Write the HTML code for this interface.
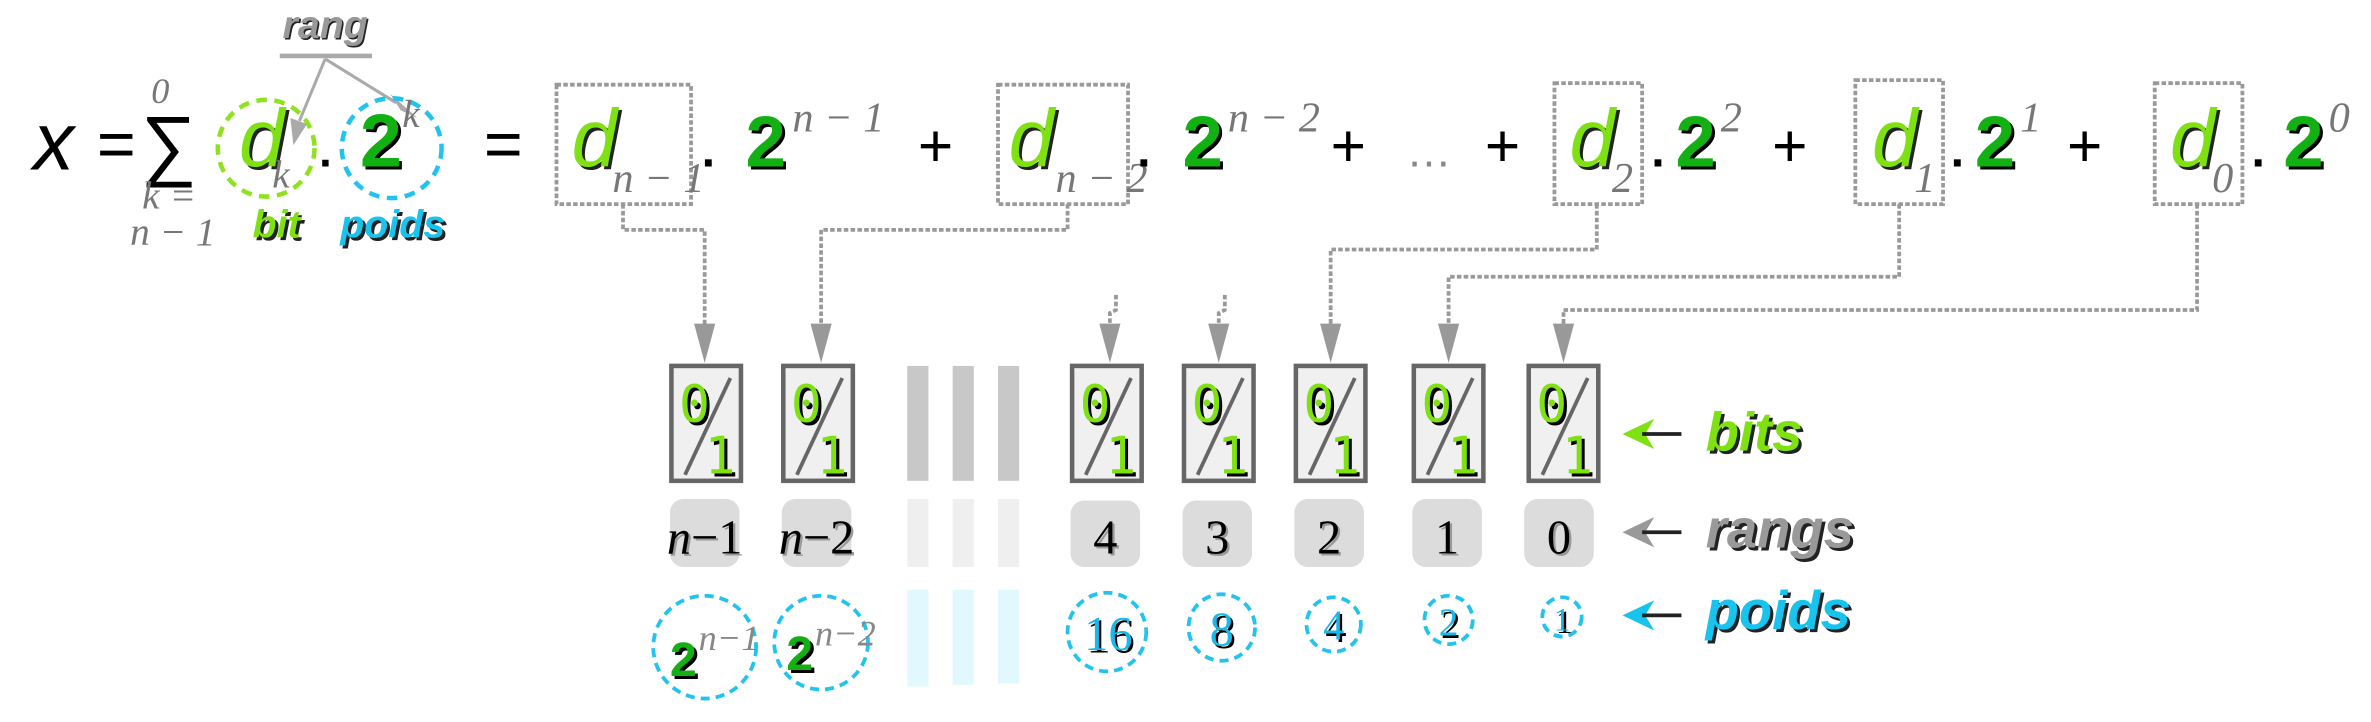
<!DOCTYPE html>
<html><head><meta charset="utf-8"><style>
html,body{margin:0;padding:0;background:#fff;width:2371px;height:722px;overflow:hidden}
svg{display:block}
.sans{font-family:"Liberation Sans",sans-serif}
.ser{font-family:"Liberation Serif",serif;font-style:italic}
.rom{font-family:"Liberation Serif",serif}
.mono{font-family:"DejaVu Sans Mono","Liberation Mono",monospace}
.lbl{font-family:"Liberation Sans",sans-serif;font-weight:bold;font-style:italic}
</style></head><body>
<svg width="2371" height="722" viewBox="0 0 1568 477.5" xmlns="http://www.w3.org/2000/svg">
<!-- rang -->
<text x="216" y="26" class="lbl" font-size="26" fill="#222" text-anchor="middle">rang</text>
<text x="215" y="25" class="lbl" font-size="26" fill="#999" text-anchor="middle">rang</text>
<line x1="185" y1="37" x2="246" y2="37" stroke="#aaa" stroke-width="3"/>
<line x1="215" y1="39" x2="198" y2="80" stroke="#aaa" stroke-width="2"/>
<polygon points="192,78 203,82 194,96" fill="#aaa"/>
<line x1="215" y1="39" x2="262" y2="68" stroke="#aaa" stroke-width="2"/>
<polygon points="258,62 265,73 276,78" fill="#aaa"/>

<!-- x = sum -->
<text x="22" y="112" class="sans" font-style="italic" font-size="54" fill="#000">x</text>
<text x="64" y="110" class="sans" font-size="44" fill="#000">=</text>
<text x="93" y="113" class="sans" font-size="52" fill="#000">∑</text>
<text x="100" y="68" class="ser" font-size="24" fill="#777">0</text>
<text x="94" y="138" class="ser" font-size="26" fill="#777">k =</text>
<text x="86" y="162" class="ser" font-size="26" fill="#777">n − 1</text>
<circle cx="176" cy="98" r="32" fill="none" stroke="#8fe21f" stroke-width="3" stroke-dasharray="7,5"/>
<circle cx="259" cy="98" r="33" fill="none" stroke="#22c3ee" stroke-width="3" stroke-dasharray="7,5"/>
<text x="160" y="112" class="sans" font-size="54" font-style="italic" fill="#222">d</text>
<text x="158" y="110" class="sans" font-size="54" font-style="italic" fill="#7fe012">d</text>
<text x="180" y="124" class="ser" font-size="26" fill="#777">k</text>
<text x="211" y="110" class="sans" font-size="30" font-weight="bold" fill="#000">.</text>
<text x="240" y="112" class="sans" font-size="50" font-weight="bold" fill="#000">2</text>
<text x="238" y="110" class="sans" font-size="50" font-weight="bold" fill="#12b012">2</text>
<text x="266" y="84" class="ser" font-size="26" fill="#777">k</text>
<text x="169" y="159" class="lbl" font-size="26" fill="#222">bit</text>
<text x="167" y="157" class="lbl" font-size="26" fill="#7fe012">bit</text>
<text x="227" y="159" class="lbl" font-size="26" fill="#222">poids</text>
<text x="225" y="157" class="lbl" font-size="26" fill="#18c3ee">poids</text>
<text x="320" y="110" class="sans" font-size="44" fill="#000">=</text>

<!-- boxes -->
<g fill="none" stroke="#999" stroke-width="2.5" stroke-dasharray="3,1.5">
<rect x="368" y="56" width="89" height="79"/>
<rect x="660" y="56" width="86" height="79"/>
<rect x="1028" y="55" width="58" height="80"/>
<rect x="1227" y="53" width="58" height="82"/>
<rect x="1425" y="55" width="58" height="80"/>
<polyline points="412,135 412,152 466,152 466,215"/>
<polyline points="706,135 706,152 543,152 543,215"/>
<polyline points="1056,135 1056,165 880,165 880,215"/>
<polyline points="1256,135 1256,183 958,183 958,215"/>
<polyline points="1453,135 1453,205 1034,205 1034,215"/>
<polyline points="738,195 738,205 734,207 734,215"/>
<polyline points="810,195 810,205 806,207 806,215"/>
</g>
<g fill="#999">
<polygon points="459,214 473,214 466,240"/>
<polygon points="536,214 550,214 543,240"/>
<polygon points="727,214 741,214 734,240"/>
<polygon points="799,214 813,214 806,240"/>
<polygon points="873,214 887,214 880,240"/>
<polygon points="951,214 965,214 958,240"/>
<polygon points="1027,214 1041,214 1034,240"/>
</g>

<!-- top terms -->
<g>
<text x="380" y="112" class="sans" font-size="54" font-style="italic" fill="#222">d</text>
<text x="378" y="110" class="sans" font-size="54" font-style="italic" fill="#7fe012">d</text>
<text x="405" y="127" class="ser" font-size="28" fill="#777">n − 1</text>
<text x="464" y="110" class="sans" font-size="32" font-weight="bold" fill="#000">.</text>
<text x="495" y="112" class="sans" font-size="48" font-weight="bold" fill="#000">2</text>
<text x="493" y="110" class="sans" font-size="48" font-weight="bold" fill="#12b012">2</text>
<text x="524" y="87" class="ser" font-size="28" fill="#777">n − 1</text>
<text x="607" y="110" class="sans" font-size="40" fill="#000">+</text>

<text x="669" y="112" class="sans" font-size="54" font-style="italic" fill="#222">d</text>
<text x="667" y="110" class="sans" font-size="54" font-style="italic" fill="#7fe012">d</text>
<text x="698" y="127" class="ser" font-size="28" fill="#777">n − 2</text>
<text x="752" y="110" class="sans" font-size="32" font-weight="bold" fill="#000">.</text>
<text x="784" y="112" class="sans" font-size="48" font-weight="bold" fill="#000">2</text>
<text x="782" y="110" class="sans" font-size="48" font-weight="bold" fill="#12b012">2</text>
<text x="812" y="87" class="ser" font-size="28" fill="#777">n − 2</text>
<text x="880" y="110" class="sans" font-size="40" fill="#000">+</text>
<text x="930" y="110" class="sans" font-size="30" fill="#888">…</text>
<text x="982" y="110" class="sans" font-size="40" fill="#000">+</text>

<text x="1040" y="112" class="sans" font-size="54" font-style="italic" fill="#222">d</text>
<text x="1038" y="110" class="sans" font-size="54" font-style="italic" fill="#7fe012">d</text>
<text x="1066" y="127" class="ser" font-size="28" fill="#777">2</text>
<text x="1092" y="110" class="sans" font-size="32" font-weight="bold" fill="#000">.</text>
<text x="1110" y="112" class="sans" font-size="48" font-weight="bold" fill="#000">2</text>
<text x="1108" y="110" class="sans" font-size="48" font-weight="bold" fill="#12b012">2</text>
<text x="1138" y="87" class="ser" font-size="28" fill="#777">2</text>
<text x="1172" y="110" class="sans" font-size="40" fill="#000">+</text>

<text x="1240" y="112" class="sans" font-size="54" font-style="italic" fill="#222">d</text>
<text x="1238" y="110" class="sans" font-size="54" font-style="italic" fill="#7fe012">d</text>
<text x="1266" y="127" class="ser" font-size="28" fill="#777">1</text>
<text x="1290" y="110" class="sans" font-size="32" font-weight="bold" fill="#000">.</text>
<text x="1308" y="112" class="sans" font-size="48" font-weight="bold" fill="#000">2</text>
<text x="1306" y="110" class="sans" font-size="48" font-weight="bold" fill="#12b012">2</text>
<text x="1336" y="87" class="ser" font-size="28" fill="#777">1</text>
<text x="1367" y="110" class="sans" font-size="40" fill="#000">+</text>

<text x="1437" y="112" class="sans" font-size="54" font-style="italic" fill="#222">d</text>
<text x="1435" y="110" class="sans" font-size="54" font-style="italic" fill="#7fe012">d</text>
<text x="1463" y="127" class="ser" font-size="28" fill="#777">0</text>
<text x="1489" y="110" class="sans" font-size="32" font-weight="bold" fill="#000">.</text>
<text x="1512" y="112" class="sans" font-size="48" font-weight="bold" fill="#000">2</text>
<text x="1510" y="110" class="sans" font-size="48" font-weight="bold" fill="#12b012">2</text>
<text x="1540" y="87" class="ser" font-size="28" fill="#777">0</text>
</g>

<!-- gray bars -->
<g fill="#c8c8c8"><rect x="600" y="242" width="14" height="76"/><rect x="630" y="242" width="14" height="76"/><rect x="660" y="242" width="14" height="76"/></g>
<g fill="#efefef"><rect x="600" y="330" width="14" height="45"/><rect x="630" y="330" width="14" height="45"/><rect x="660" y="330" width="14" height="45"/></g>
<g fill="#e2f8ff"><rect x="600" y="390" width="14" height="64"/><rect x="630" y="390" width="14" height="63"/><rect x="660" y="390" width="14" height="62"/></g>

<!-- bit boxes -->
<g>
<g transform="translate(443,0)"><rect x="1" y="242" width="46" height="76" fill="#f0f0f0" stroke="#666" stroke-width="3"/><line x1="40" y1="250" x2="10" y2="314" stroke="#666" stroke-width="2.5"/><text x="8" y="281" class="mono" font-size="34" fill="#000">0</text><text x="6" y="279" class="mono" font-size="34" fill="#7fe012">0</text><text x="25" y="315" class="mono" font-size="34" fill="#000">1</text><text x="23" y="313" class="mono" font-size="34" fill="#7fe012">1</text></g>
<g transform="translate(517,0)"><rect x="1" y="242" width="46" height="76" fill="#f0f0f0" stroke="#666" stroke-width="3"/><line x1="40" y1="250" x2="10" y2="314" stroke="#666" stroke-width="2.5"/><text x="8" y="281" class="mono" font-size="34" fill="#000">0</text><text x="6" y="279" class="mono" font-size="34" fill="#7fe012">0</text><text x="25" y="315" class="mono" font-size="34" fill="#000">1</text><text x="23" y="313" class="mono" font-size="34" fill="#7fe012">1</text></g>
<g transform="translate(708,0)"><rect x="1" y="242" width="46" height="76" fill="#f0f0f0" stroke="#666" stroke-width="3"/><line x1="40" y1="250" x2="10" y2="314" stroke="#666" stroke-width="2.5"/><text x="8" y="281" class="mono" font-size="34" fill="#000">0</text><text x="6" y="279" class="mono" font-size="34" fill="#7fe012">0</text><text x="25" y="315" class="mono" font-size="34" fill="#000">1</text><text x="23" y="313" class="mono" font-size="34" fill="#7fe012">1</text></g>
<g transform="translate(782,0)"><rect x="1" y="242" width="46" height="76" fill="#f0f0f0" stroke="#666" stroke-width="3"/><line x1="40" y1="250" x2="10" y2="314" stroke="#666" stroke-width="2.5"/><text x="8" y="281" class="mono" font-size="34" fill="#000">0</text><text x="6" y="279" class="mono" font-size="34" fill="#7fe012">0</text><text x="25" y="315" class="mono" font-size="34" fill="#000">1</text><text x="23" y="313" class="mono" font-size="34" fill="#7fe012">1</text></g>
<g transform="translate(856,0)"><rect x="1" y="242" width="46" height="76" fill="#f0f0f0" stroke="#666" stroke-width="3"/><line x1="40" y1="250" x2="10" y2="314" stroke="#666" stroke-width="2.5"/><text x="8" y="281" class="mono" font-size="34" fill="#000">0</text><text x="6" y="279" class="mono" font-size="34" fill="#7fe012">0</text><text x="25" y="315" class="mono" font-size="34" fill="#000">1</text><text x="23" y="313" class="mono" font-size="34" fill="#7fe012">1</text></g>
<g transform="translate(934,0)"><rect x="1" y="242" width="46" height="76" fill="#f0f0f0" stroke="#666" stroke-width="3"/><line x1="40" y1="250" x2="10" y2="314" stroke="#666" stroke-width="2.5"/><text x="8" y="281" class="mono" font-size="34" fill="#000">0</text><text x="6" y="279" class="mono" font-size="34" fill="#7fe012">0</text><text x="25" y="315" class="mono" font-size="34" fill="#000">1</text><text x="23" y="313" class="mono" font-size="34" fill="#7fe012">1</text></g>
<g transform="translate(1010,0)"><rect x="1" y="242" width="46" height="76" fill="#f0f0f0" stroke="#666" stroke-width="3"/><line x1="40" y1="250" x2="10" y2="314" stroke="#666" stroke-width="2.5"/><text x="8" y="281" class="mono" font-size="34" fill="#000">0</text><text x="6" y="279" class="mono" font-size="34" fill="#7fe012">0</text><text x="25" y="315" class="mono" font-size="34" fill="#000">1</text><text x="23" y="313" class="mono" font-size="34" fill="#7fe012">1</text></g>
</g>

<!-- rangs -->
<g fill="#dcdcdc">
<rect x="443" y="330" width="46" height="45" rx="9"/><rect x="517" y="330" width="46" height="45" rx="9"/>
<rect x="708" y="331" width="46" height="44" rx="9"/><rect x="782" y="331" width="46" height="44" rx="9"/>
<rect x="856" y="330" width="46" height="45" rx="9"/><rect x="934" y="330" width="46" height="45" rx="9"/>
<rect x="1008" y="330" width="46" height="45" rx="9"/>
</g>
<g class="rom" font-size="32" text-anchor="middle">
<g fill="#999" transform="translate(1.5,1.5)">
<text x="466" y="366"><tspan font-style="italic">n</tspan>−1</text>
<text x="540" y="366"><tspan font-style="italic">n</tspan>−2</text>
<text x="731" y="366">4</text><text x="805" y="366">3</text><text x="879" y="366">2</text><text x="957" y="366">1</text><text x="1031" y="366">0</text>
</g>
<g fill="#000">
<text x="466" y="366"><tspan font-style="italic">n</tspan>−1</text>
<text x="540" y="366"><tspan font-style="italic">n</tspan>−2</text>
<text x="731" y="366">4</text><text x="805" y="366">3</text><text x="879" y="366">2</text><text x="957" y="366">1</text><text x="1031" y="366">0</text>
</g>
</g>

<!-- poids -->
<g fill="none" stroke="#22c3ee" stroke-width="2.5" stroke-dasharray="6,4">
<circle cx="466" cy="428" r="34"/><circle cx="543" cy="425" r="31"/>
<circle cx="732" cy="418" r="26"/><circle cx="808" cy="415" r="22"/>
<circle cx="882" cy="413" r="18"/><circle cx="958" cy="410" r="16"/><circle cx="1033" cy="408" r="13"/>
</g>
<text x="445" y="449" class="sans" font-size="32" font-weight="bold" fill="#000">2</text>
<text x="443" y="447" class="sans" font-size="32" font-weight="bold" fill="#12b012">2</text>
<text x="462" y="430" class="ser" font-size="24" fill="#888">n−1</text>
<text x="522" y="445" class="sans" font-size="32" font-weight="bold" fill="#000">2</text>
<text x="520" y="443" class="sans" font-size="32" font-weight="bold" fill="#12b012">2</text>
<text x="539" y="427" class="ser" font-size="24" fill="#888">n−2</text>
<g class="rom" text-anchor="middle">
<g fill="#000" transform="translate(1.5,1.5)">
<text x="733" y="430" font-size="32">16</text><text x="808" y="427" font-size="32">8</text><text x="882" y="423" font-size="28">4</text><text x="958" y="420" font-size="26">2</text><text x="1033" y="417" font-size="22">1</text>
</g>
<g fill="#18b8e8">
<text x="733" y="430" font-size="32">16</text><text x="808" y="427" font-size="32">8</text><text x="882" y="423" font-size="28">4</text><text x="958" y="420" font-size="26">2</text><text x="1033" y="417" font-size="22">1</text>
</g>
</g>

<!-- labels -->
<g>
<polygon points="1073,287 1094,277 1088,287 1094,297" fill="#7fe012"/><line x1="1086" y1="287" x2="1112" y2="287" stroke="#222" stroke-width="2.5"/>
<text x="1130" y="300" class="lbl" font-size="36" fill="#222">bits</text><text x="1128" y="298" class="lbl" font-size="36" fill="#7fe012">bits</text>
<polygon points="1073,352 1094,342 1088,352 1094,362" fill="#999"/><line x1="1086" y1="352" x2="1112" y2="352" stroke="#222" stroke-width="2.5"/>
<text x="1130" y="364" class="lbl" font-size="36" fill="#222">rangs</text><text x="1128" y="362" class="lbl" font-size="36" fill="#999">rangs</text>
<polygon points="1073,407 1094,397 1088,407 1094,417" fill="#18c3ee"/><line x1="1086" y1="407" x2="1112" y2="407" stroke="#222" stroke-width="2.5"/>
<text x="1130" y="418" class="lbl" font-size="36" fill="#222">poids</text><text x="1128" y="416" class="lbl" font-size="36" fill="#18c3ee">poids</text>
</g>
</svg>
</body></html>
